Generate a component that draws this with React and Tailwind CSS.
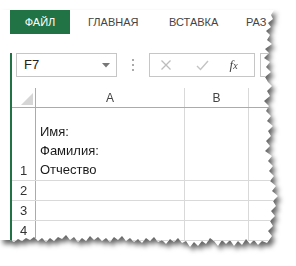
import React from 'react'

const edge = [
  [0, 10], [274, 10], [271, 15], [273, 19], [268, 23], [271, 27], [266, 31], [270, 35], [267, 40], [272, 44],
  [265, 49], [269, 53], [264, 58], [270, 62], [266, 67], [271, 72], [265, 77], [268, 82], [272, 86],
  [267, 91], [270, 96], [264, 101], [269, 106], [266, 111], [271, 116], [267, 121], [273, 126], [268, 131],
  [271, 136], [266, 141], [270, 146], [265, 151], [272, 156], [268, 161], [273, 166], [269, 171], [274, 176],
  [270, 181], [276, 186], [272, 191], [278, 196], [273, 201], [276, 206], [271, 211], [275, 216], [270, 221],
  [273, 226], [268, 231], [272, 236], [267, 243],
  [262, 241], [258, 245], [254, 240], [250, 244], [246, 239], [242, 245], [238, 241], [234, 246], [230, 240],
  [226, 244], [222, 240], [218, 246], [214, 241], [210, 238], [206, 244], [202, 241], [198, 246], [194, 242],
  [190, 247], [186, 241], [182, 243], [178, 238], [174, 242], [170, 239], [166, 244], [162, 240], [158, 242],
  [154, 237], [150, 241], [146, 238], [142, 243], [138, 239], [134, 242], [130, 238], [126, 241], [122, 236],
  [118, 240], [114, 237], [110, 242], [106, 238], [102, 241], [98, 237], [94, 240], [90, 236], [86, 241],
  [82, 238], [78, 242], [74, 237], [70, 240], [66, 235], [62, 239], [58, 237], [54, 241], [50, 238],
  [46, 242], [42, 238], [38, 241], [34, 237], [30, 240], [26, 238], [22, 241], [18, 239], [14, 242],
  [10, 240], [0, 240]
]

const tornPath = 'M' + edge.map(p => p.join(' ')).join(' L') + ' Z'

const font = "font-['Liberation_Sans',Arial,sans-serif]"

const Row = ({ num, h, children }) => (
  <div className={`flex border-b border-[#d9d9d9] ${h}`}>
    <div className="w-[24px] shrink-0 border-r border-[#ababab] flex items-end justify-center pb-[2px] text-[13px] leading-[15px] text-[#333]">
      {num}
    </div>
    <div className="w-[149px] shrink-0 border-r border-[#d9d9d9] flex flex-col justify-end pl-[4px] pb-[1px] text-[13px] leading-[19px] text-[#1a1a1a]">
      {children}
    </div>
    <div className="w-[64px] shrink-0 border-r border-[#d9d9d9]" />
    <div className="flex-1" />
  </div>
)

export default function App() {
  return (
    <div className={`w-[296px] h-[266px] bg-white relative overflow-hidden ${font}`}>
      <svg width="0" height="0" className="absolute">
        <defs>
          <clipPath id="torn" clipPathUnits="userSpaceOnUse">
            <path d={tornPath} />
          </clipPath>
        </defs>
      </svg>

      <div className="w-full h-full [filter:drop-shadow(3px_4px_2.5px_rgba(0,0,0,0.6))]">
        <div className="w-full h-full bg-white pl-[10px] pt-[10px] [clip-path:url(#torn)]">
          <div className="w-[290px]">
            {/* Ribbon tabs */}
            <div className="flex h-[24px] items-center text-[11px] text-[#444]">
              <div className="w-[60px] h-full bg-[#217346] text-white flex items-center justify-center">ФАЙЛ</div>
              <div className="w-[99px] pl-[18px]">ГЛАВНАЯ</div>
              <div className="w-[77px]">ВСТАВКА</div>
              <div className="whitespace-nowrap">РАЗ</div>
            </div>

            <div className="border-l-2 border-[#217346] h-[206px]">
              {/* Formula bar */}
              <div className="flex items-center mt-[19px] h-[24px]">
                <div className="ml-[4px] w-[101px] h-full border border-[#c6c6c6] flex items-center justify-between pl-[7px] pr-[6px]">
                  <span className="text-[13px] text-[#222]">F7</span>
                  <svg width="8" height="5" viewBox="0 0 8 5"><path d="M0 0 H8 L4 4.5 Z" fill="#777" /></svg>
                </div>
                <div className="w-[32px] flex flex-col items-center gap-[3px]">
                  <span className="w-[2px] h-[2px] bg-[#aaa]" />
                  <span className="w-[2px] h-[2px] bg-[#aaa]" />
                  <span className="w-[2px] h-[2px] bg-[#aaa]" />
                </div>
                <div className="w-[107px] h-full border border-[#c6c6c6] flex items-center">
                  <svg width="12" height="12" viewBox="0 0 12 12" className="ml-[10px]">
                    <path d="M1.5 1.5 L10.5 10.5 M10.5 1.5 L1.5 10.5" stroke="#bdbdbd" strokeWidth="1.3" />
                  </svg>
                  <svg width="13" height="11" viewBox="0 0 13 11" className="ml-[24px]">
                    <path d="M1 6 L4.5 9.5 L12 1" fill="none" stroke="#c4c4c4" strokeWidth="1.4" />
                  </svg>
                  <span className="ml-[21px] font-['Liberation_Serif',serif] italic text-[13px] text-[#444]">f<span className="text-[10px]">x</span></span>
                </div>
                <div className="ml-[5px] w-[40px] h-full border border-[#c6c6c6]" />
              </div>

              {/* Column headers */}
              <div className="flex h-[20px] mt-[11px] border-b border-[#ababab] text-[12px] text-[#444]">
                <div className="w-[24px] shrink-0 border-r border-[#ababab] flex items-end justify-end pr-[2px] pb-[2px]">
                  <svg width="12" height="12" viewBox="0 0 12 12"><path d="M12 0 V12 H0 Z" fill="#d6d6d6" /></svg>
                </div>
                <div className="w-[149px] shrink-0 border-r border-[#d9d9d9] flex items-center justify-center">A</div>
                <div className="w-[64px] shrink-0 border-r border-[#d9d9d9] flex items-center justify-center">B</div>
                <div className="flex-1" />
              </div>

              {/* Rows */}
              <Row num="1" h="h-[73px]">
                <span>Имя:</span>
                <span>Фамилия:</span>
                <span>Отчество</span>
              </Row>
              <Row num="2" h="h-[20px]" />
              <Row num="3" h="h-[20px]" />
              <Row num="4" h="h-[20px]" />
            </div>
          </div>
        </div>
      </div>
    </div>
  )
}
